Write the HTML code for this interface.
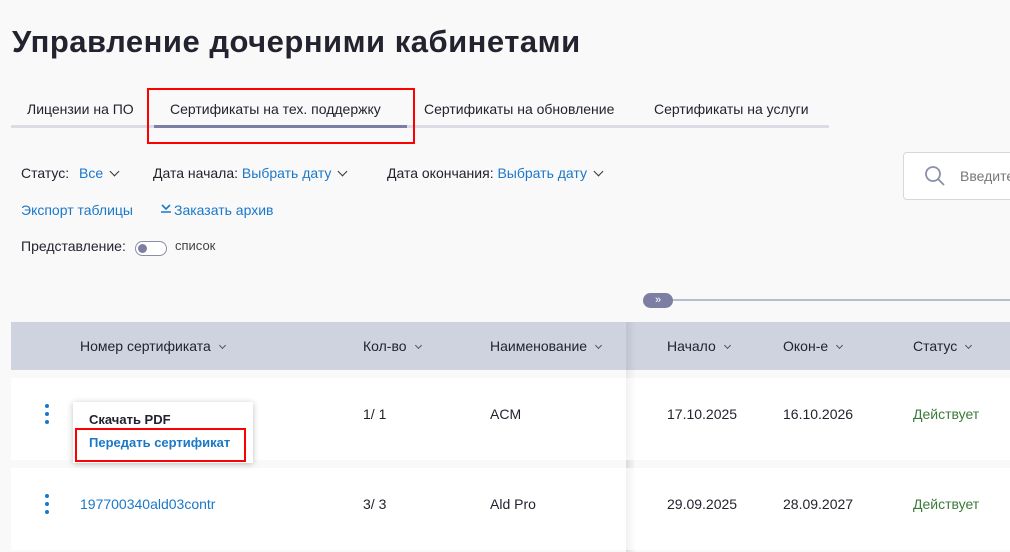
<!DOCTYPE html><html><head><meta charset="utf-8"><style>
*{margin:0;padding:0;box-sizing:border-box}
body{width:1010px;height:552px;overflow:hidden;background:#f9f9fa;font-family:"Liberation Sans",sans-serif;color:#23232f;position:relative;font-size:14px}
.a{position:absolute;white-space:nowrap}
.b{color:#1b78c8}
.chev{display:inline-block;width:7px;height:7px;border-right:1.5px solid #333;border-bottom:1.5px solid #333;transform:rotate(45deg);margin-left:8px;position:relative;top:-3px}
.sc{display:inline-block;width:5px;height:5px;border-right:1px solid #555;border-bottom:1px solid #555;transform:rotate(45deg);margin-left:9px;position:relative;top:-3px}
.row{position:absolute;left:11px;width:999px;background:#fff}
.dots{position:absolute;left:45px;width:4px}
.dots i{display:block;width:4px;height:4px;border-radius:50%;background:#1b78c8;margin-bottom:4px}
</style></head><body>
<div class="a" style="left:12px;top:24px;font-size:31px;font-weight:bold;letter-spacing:0.5px">Управление дочерними кабинетами</div>
<div style="position:absolute;left:11px;top:125px;width:818px;height:3px;background:#dcdce6"></div>
<div style="position:absolute;left:154px;top:125px;width:253px;height:3px;background:#7c7fa3"></div>
<div class="a" style="left:27px;top:101px">Лицензии на ПО</div>
<div class="a" style="left:170px;top:101px">Сертификаты на тех. поддержку</div>
<div class="a" style="left:424px;top:101px">Сертификаты на обновление</div>
<div class="a" style="left:654px;top:101px">Сертификаты на услуги</div>
<div style="position:absolute;left:147px;top:88px;width:268px;height:56px;border:2px solid #f00"></div>
<div class="a" style="left:21px;top:165px">Статус: <span class="b" style="margin-left:6px">Все</span><span class="chev"></span></div>
<div class="a" style="left:153px;top:165px">Дата начала: <span class="b">Выбрать дату</span><span class="chev"></span></div>
<div class="a" style="left:387px;top:165px">Дата окончания: <span class="b">Выбрать дату</span><span class="chev"></span></div>
<div style="position:absolute;left:903px;top:152px;width:120px;height:48px;border:1px solid #d6d8e0;border-radius:4px;background:#fff"></div>
<svg class="a" style="left:924px;top:165px" width="22" height="22"><circle cx="9" cy="9" r="7" fill="none" stroke="#8a90a8" stroke-width="1.8"/><path d="M14 14l6 6" stroke="#8a90a8" stroke-width="1.8"/></svg>
<div class="a" style="left:960px;top:168px;color:#777">Введите</div>
<div class="a b" style="left:21px;top:202px">Экспорт таблицы</div>
<svg class="a" style="left:160px;top:204px" width="12" height="10"><path d="M2 1l4 4 4-4M1 8h10" stroke="#1b78c8" stroke-width="1.6" fill="none"/></svg>
<div class="a b" style="left:174px;top:202px">Заказать архив</div>
<div class="a" style="left:21px;top:238px">Представление:</div>
<div style="position:absolute;left:135px;top:241px;width:32px;height:15px;border:1.5px solid #8a8ea6;border-radius:8px;background:#fff"></div>
<div style="position:absolute;left:138px;top:244px;width:9px;height:9px;border-radius:50%;background:#7c7fa3"></div>
<div class="a" style="left:175px;top:238px;font-size:13px;color:#444">список</div>
<div style="position:absolute;left:672px;top:299px;width:338px;height:2px;background:#b8bccf"></div>
<div style="position:absolute;left:643px;top:293px;width:30px;height:15px;border-radius:8px;background:#7c7fa3;color:#fff;font-size:11px;line-height:14px;text-align:center">»</div>
<div style="position:absolute;left:11px;top:322px;width:999px;height:48px;background:#cfd3df"></div>
<div style="position:absolute;left:626px;top:322px;width:10px;height:230px;background:linear-gradient(90deg,rgba(0,0,0,.07),rgba(0,0,0,0))"></div>
<div class="a" style="left:80px;top:338px">Номер сертификата<span class="sc"></span></div>
<div class="a" style="left:363px;top:338px">Кол-во<span class="sc"></span></div>
<div class="a" style="left:490px;top:338px">Наименование<span class="sc"></span></div>
<div class="a" style="left:667px;top:338px">Начало<span class="sc"></span></div>
<div class="a" style="left:783px;top:338px">Окон-е<span class="sc"></span></div>
<div class="a" style="left:913px;top:338px">Статус<span class="sc"></span></div>
<div class="row" style="top:378px;height:82px"></div>
<div class="row" style="top:468px;height:82px"></div>
<div style="position:absolute;left:626px;top:378px;width:10px;height:174px;background:linear-gradient(90deg,rgba(0,0,0,.05),rgba(0,0,0,0))"></div>
<div class="dots" style="top:404px"><i></i><i></i><i></i></div>
<div class="dots" style="top:494px"><i></i><i></i><i></i></div>
<div class="a" style="left:363px;top:406px">1/ 1</div>
<div class="a" style="left:490px;top:406px">ACM</div>
<div class="a" style="left:667px;top:406px">17.10.2025</div>
<div class="a" style="left:783px;top:406px">16.10.2026</div>
<div class="a" style="left:913px;top:406px;color:#3c7a3c">Действует</div>
<div class="a b" style="left:80px;top:496px">197700340ald03contr</div>
<div class="a" style="left:363px;top:496px">3/ 3</div>
<div class="a" style="left:490px;top:496px">Ald Pro</div>
<div class="a" style="left:667px;top:496px">29.09.2025</div>
<div class="a" style="left:783px;top:496px">28.09.2027</div>
<div class="a" style="left:913px;top:496px;color:#3c7a3c">Действует</div>
<div style="position:absolute;left:73px;top:402px;width:180px;height:61px;background:#fff;box-shadow:0 1px 6px rgba(0,0,0,.25)"></div>
<div class="a" style="left:89px;top:412px;font-size:13px;font-weight:bold">Скачать PDF</div>
<div class="a b" style="left:89px;top:435px;font-size:13px;font-weight:bold">Передать сертификат</div>
<div style="position:absolute;left:75px;top:428px;width:171px;height:34px;border:2px solid #f00"></div>
</body></html>
